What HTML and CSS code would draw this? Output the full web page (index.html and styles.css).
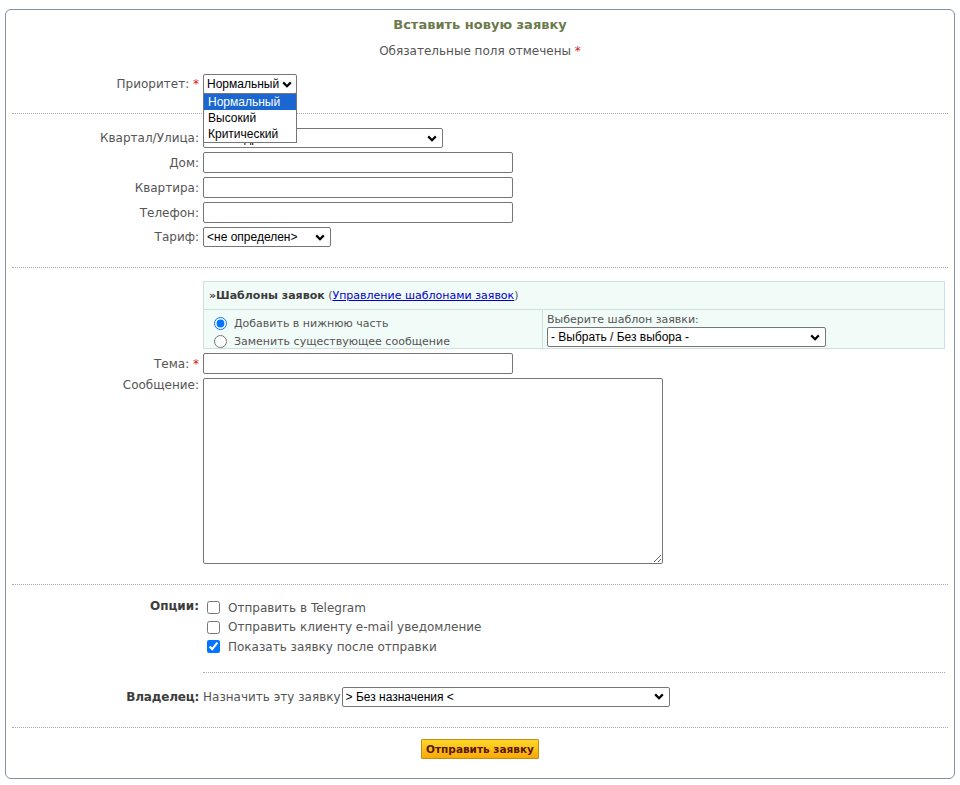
FILE: index.html
```html
<!DOCTYPE html>
<html lang="ru">
<head>
    <meta charset="UTF-8">
    <title>Вставить новую заявку</title>
    <link rel="stylesheet" href="styles.css">
</head>
<body>

<form class="form-box">
    <h2 class="form-title">Вставить новую заявку</h2>
    <p class="form-note">Обязательные поля отмечены <span class="req">*</span></p>

    <div class="row row-first">
        <label class="lbl">Приоритет: <span class="req">*</span></label>
        <div class="field priority">
            <select class="sel sel-priority">
                <option>Нормальный</option>
                <option>Высокий</option>
                <option>Критический</option>
            </select>
            <!-- раскрытый список приоритетов -->
            <ul class="drop-list">
                <li class="active">Нормальный</li>
                <li>Высокий</li>
                <li>Критический</li>
            </ul>
        </div>
    </div>

    <hr class="sep sep-a">

    <div class="rows">
        <div class="row">
            <label class="lbl">Квартал/Улица:</label>
            <div class="field"><select class="sel sel-street"><option>- Без адреса -</option></select></div>
        </div>
        <div class="row">
            <label class="lbl">Дом:</label>
            <div class="field"><input class="inp" type="text"></div>
        </div>
        <div class="row">
            <label class="lbl">Квартира:</label>
            <div class="field"><input class="inp" type="text"></div>
        </div>
        <div class="row">
            <label class="lbl">Телефон:</label>
            <div class="field"><input class="inp" type="text"></div>
        </div>
        <div class="row">
            <label class="lbl">Тариф:</label>
            <div class="field"><select class="sel sel-tariff"><option>&lt;не определен&gt;</option></select></div>
        </div>
    </div>

    <hr class="sep sep-b">

    <div class="rows rows-msg">
        <div class="row">
            <span class="lbl"></span>
            <div class="field">
                <div class="tpl">
                    <div class="tpl-head">
                        <b>»Шаблоны заявок</b> (<a href="#">Управление шаблонами заявок</a>)
                    </div>
                    <div class="tpl-body">
                        <div class="tpl-mode">
                            <label class="radio"><input type="radio" name="mode" checked> Добавить в нижнюю часть</label>
                            <label class="radio"><input type="radio" name="mode"> Заменить существующее сообщение</label>
                        </div>
                        <div class="tpl-pick">
                            <div class="tpl-caption">Выберите шаблон заявки:</div>
                            <select class="sel sel-tpl"><option>- Выбрать / Без выбора -</option></select>
                        </div>
                    </div>
                </div>
            </div>
        </div>
        <div class="row">
            <label class="lbl">Тема: <span class="req">*</span></label>
            <div class="field"><input class="inp" type="text"></div>
        </div>
        <div class="row row-top">
            <label class="lbl">Сообщение:</label>
            <div class="field"><textarea class="msg"></textarea></div>
        </div>
    </div>

    <hr class="sep sep-c">

    <div class="row row-top options">
        <label class="lbl lbl-bold">Опции:</label>
        <div class="field">
            <label class="check"><input type="checkbox"> Отправить в Telegram</label>
            <label class="check"><input type="checkbox"> Отправить клиенту e-mail уведомление</label>
            <label class="check"><input type="checkbox" checked> Показать заявку после отправки</label>
        </div>
    </div>

    <div class="row">
        <span class="lbl"></span>
        <div class="field"><hr class="sep sep-inner"></div>
    </div>

    <div class="row owner">
        <label class="lbl lbl-bold lbl-owner">Владелец:</label>
        <div class="field owner-field">
            <span class="owner-text">Назначить эту заявку</span>
            <select class="sel sel-owner"><option>&gt; Без назначения &lt;</option></select>
        </div>
    </div>

    <hr class="sep sep-d">

    <div class="actions">
        <button type="button" class="btn-submit">Отправить заявку</button>
    </div>
</form>

</body>
</html>
```

FILE: styles.css
```css
body {
    margin: 0;
    padding: 9px 5px 0;
    background: #fff;
    font-family: 'DejaVu Sans', Verdana, sans-serif;
    font-size: 12px;
    color: #555;
}

.form-box {
    border: 1px solid #8190a3;
    border-radius: 6px;
    padding: 7px 6px 18px;
    height: 770px;
    box-sizing: border-box;
}

.form-title {
    margin: 0;
    text-align: center;
    font-size: 13px;
    line-height: 16px;
    color: #6b7a4c;
}

.form-note {
    margin: 10px 0 0;
    text-align: center;
    line-height: 16px;
}

.req {
    color: #d0202a;
}

/* строки формы: подпись справа, поле слева */
.row {
    display: grid;
    grid-template-columns: 187px 742px;
    column-gap: 4px;
    align-items: center;
}

.row-first {
    margin-top: 15px;
}

.row-top {
    align-items: start;
}

.rows {
    display: flex;
    flex-direction: column;
    gap: 4px;
}

.lbl {
    text-align: right;
    white-space: nowrap;
}

.lbl-bold {
    font-weight: bold;
    color: #3c3c3c;
}

.lbl-owner {
    letter-spacing: -0.2px;
}

.field {
    display: flex;
    flex-direction: column;
    align-items: flex-start;
}

.sep {
    margin: 0;
    border: 0;
    border-top: 1px dotted #a9a9a9;
    height: 0;
}

.sep-a { margin-top: 19px; margin-bottom: 14px; }
.sep-b { margin-top: 20px; margin-bottom: 13px; }
.sep-c { margin-top: 20px; margin-bottom: 13px; }
.sep-d { margin-top: 20px; margin-bottom: 11px; }

.sep-inner {
    width: 742px;
    margin: 15px 0 14px;
}

/* селекты с собственной стрелкой */
.sel {
    appearance: none;
    -webkit-appearance: none;
    font-family: 'Liberation Sans', Arial, sans-serif;
    font-size: 12px;
    height: 20px;
    padding: 0 14px 0 3px;
    border: 1px solid #767676;
    border-radius: 2px;
    background: #fff url("data:image/svg+xml,%3Csvg xmlns='http://www.w3.org/2000/svg' width='10' height='7' viewBox='0 0 10 7'%3E%3Cpath d='M1.2 1.4L5 5.2l3.8-3.8' fill='none' stroke='%23000' stroke-width='2.2'/%3E%3C/svg%3E") no-repeat right 5px center;
    color: #000;
    box-sizing: border-box;
}

.sel-priority {
    width: 94px;
    padding: 0 10px 0 3px;
    background-position: right 4px center;
}

.sel-street { width: 240px; }
.sel-tariff { width: 128px; }
.sel-tpl { width: 279px; }
.sel-owner { width: 328px; }

.inp {
    width: 310px;
    height: 21px;
    box-sizing: border-box;
    border: 1px solid #767676;
    border-radius: 2px;
    margin: 0;
}

.priority {
    position: relative;
}

/* открытый список поверх следующей строки */
.drop-list {
    position: absolute;
    top: 19px;
    left: 0;
    width: 94px;
    margin: 0;
    padding: 0;
    list-style: none;
    background: #fff;
    border: 1px solid #767676;
    box-sizing: border-box;
    font-family: 'Liberation Sans', Arial, sans-serif;
    font-size: 12px;
    color: #000;
    z-index: 10;
}

.drop-list li {
    height: 16px;
    line-height: 16px;
    padding-left: 4px;
}

.drop-list li.active {
    background: #1a67d2;
    color: #fff;
}

/* блок шаблонов */
.tpl {
    width: 742px;
    height: 68px;
    box-sizing: border-box;
    border: 1px solid #cfe1dd;
    background: #f1fbf7;
    font-size: 11px;
    display: flex;
    flex-direction: column;
}

.tpl-head {
    height: 27px;
    line-height: 28px;
    padding-left: 5px;
    border-bottom: 1px solid #cfe1dd;
    color: #555;
}

.tpl-head b {
    color: #3c3c3c;
}

.tpl-head a {
    color: #0000cc;
}

.tpl-body {
    display: flex;
    flex: 1;
}

.tpl-mode {
    width: 339px;
    border-right: 1px solid #cfe1dd;
    padding: 4px 0 0 10px;
    box-sizing: border-box;
    display: flex;
    flex-direction: column;
}

.radio {
    display: flex;
    align-items: center;
    height: 18px;
}

.radio input {
    margin: 0 7px 0 0;
    width: 13px;
    height: 13px;
}

.tpl-pick {
    padding: 3px 0 0 4px;
}

.tpl-caption {
    line-height: 13px;
    margin-bottom: 1px;
}

.msg {
    width: 460px;
    height: 186px;
    box-sizing: border-box;
    border: 1px solid #767676;
    border-radius: 2px;
    margin: 0;
    resize: both;
}

.options .lbl {
    line-height: 17px;
}

.check {
    display: flex;
    align-items: center;
    height: 19.5px;
    color: #555;
    font-size: 12px;
}

.check input {
    margin: 0 8px 0 4px;
    width: 13px;
    height: 13px;
}

.owner-field {
    flex-direction: row;
    align-items: center;
    gap: 1px;
}

.owner-text {
    white-space: nowrap;
}

.actions {
    display: flex;
    justify-content: center;
}

.btn-submit {
    width: 118px;
    height: 20px;
    padding: 0;
    border: 1px solid #c88a16;
    border-radius: 1px;
    background: linear-gradient(#ffd829, #f9a806);
    color: #5a1608;
    font-family: 'DejaVu Sans', Verdana, sans-serif;
    font-size: 10.5px;
    font-weight: bold;
    cursor: pointer;
}
```
